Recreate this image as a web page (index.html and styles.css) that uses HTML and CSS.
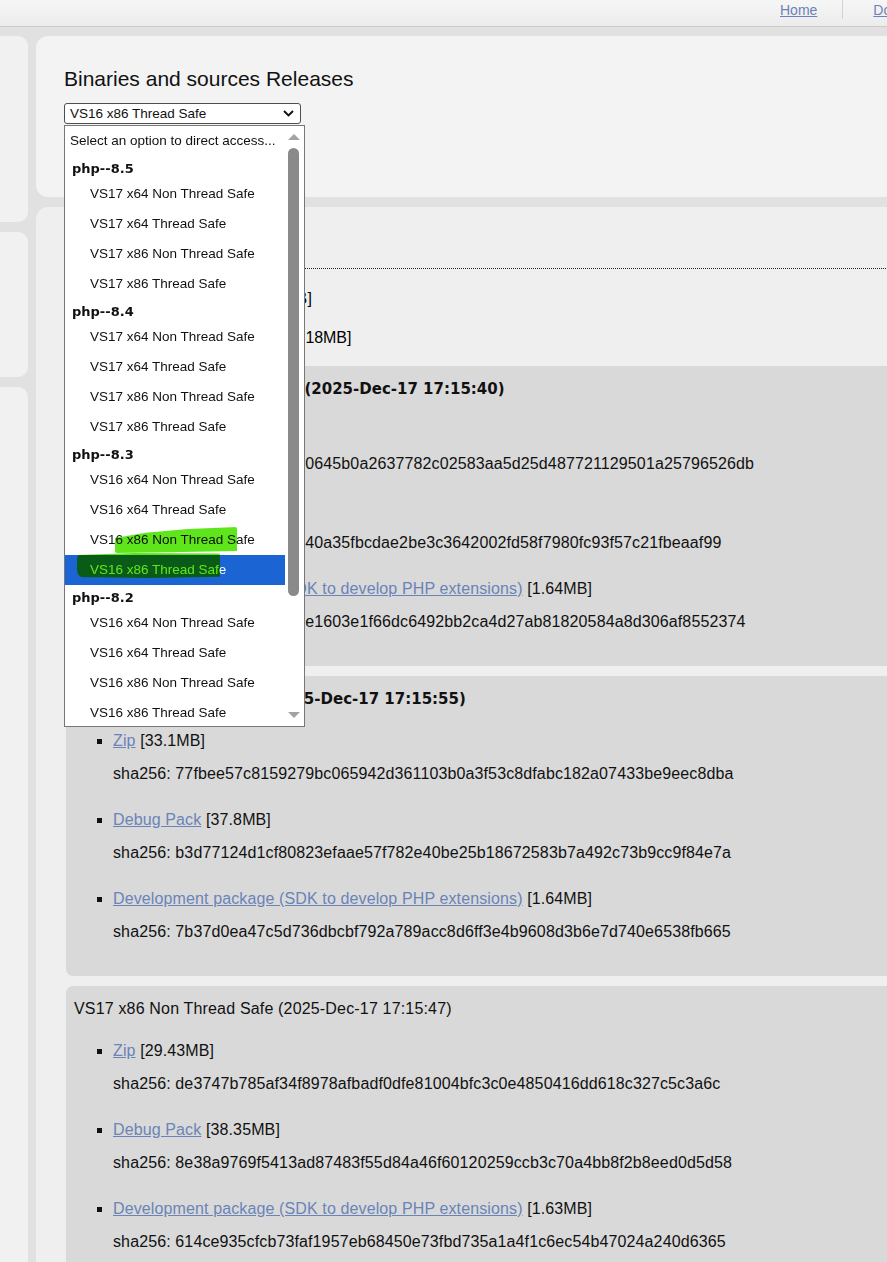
FILE: index.html
```html
<!DOCTYPE html>
<html lang="en">
<head>
<meta charset="utf-8">
<title>Binaries and sources Releases</title>
<link rel="stylesheet" href="styles.css">
</head>
<body>
<header class="topbar">
  <a class="navlink" href="#">Home</a>
  <span class="navsep"></span>
  <a class="navlink navlink-next" href="#">Downloads</a>
</header>
<div class="page">
  <aside class="sidebar">
    <div class="side-card side-a"></div>
    <div class="side-card side-b"></div>
    <div class="side-card side-c"></div>
  </aside>
  <main class="main">
    <section class="card card-select">
      <h2 class="title">Binaries and sources Releases</h2>
      <div class="select">
        <span class="select-value">VS16 x86 Thread Safe</span>
        <svg class="chevron" width="11" height="7" viewBox="0 0 11 7"><polyline points="1,1 5.5,5.5 10,1" fill="none" stroke="#111" stroke-width="1.9"/></svg>
      </div>
      <div class="popup">
        <ul class="options">
          <li class="opt placeholder">Select an option to direct access...</li>
          <li class="grp">php--8.5</li>
          <li class="opt">VS17 x64 Non Thread Safe</li>
          <li class="opt">VS17 x64 Thread Safe</li>
          <li class="opt">VS17 x86 Non Thread Safe</li>
          <li class="opt">VS17 x86 Thread Safe</li>
          <li class="grp">php--8.4</li>
          <li class="opt">VS17 x64 Non Thread Safe</li>
          <li class="opt">VS17 x64 Thread Safe</li>
          <li class="opt">VS17 x86 Non Thread Safe</li>
          <li class="opt">VS17 x86 Thread Safe</li>
          <li class="grp">php--8.3</li>
          <li class="opt">VS16 x64 Non Thread Safe</li>
          <li class="opt">VS16 x64 Thread Safe</li>
          <li class="opt">VS16 x86 Non Thread Safe</li>
          <li class="opt selected">VS16 x86 Thread Safe</li>
          <li class="grp">php--8.2</li>
          <li class="opt">VS16 x64 Non Thread Safe</li>
          <li class="opt">VS16 x64 Thread Safe</li>
          <li class="opt">VS16 x86 Non Thread Safe</li>
          <li class="opt">VS16 x86 Thread Safe</li>
          <li class="grp">php--8.1</li>
          <li class="opt">VS16 x64 Non Thread Safe</li>
        </ul>
        <div class="scrollbar">
          <span class="arrow arrow-up"></span>
          <span class="thumb"></span>
          <span class="arrow arrow-down"></span>
        </div>
        <span class="mark mark-1"></span>
        <span class="mark mark-2"></span>
      </div>
    </section>

    <section class="card card-release">
      <h3 class="release-title">PHP 8.5 (8.5.1)</h3>
      <span class="release-line first"><a class="link" href="#">Download source code</a> [26.15MB]</span>
      <span class="release-line second"><a class="link" href="#">Download tests package (phpt)</a> [6.18MB]</span>

      <div class="innerbox">
        <h4 class="build">VS17 x64 Non Thread Safe (2025-Dec-17 17:15:40)</h4>
        <ul class="files">
          <li><a class="link" href="#">Zip</a> [31.78MB]<span class="sha">sha256: 3b9e81d4c7a2f580645b0a2637782c02583aa5d25d487721129501a25796526db</span></li>
          <li><a class="link" href="#">Debug Pack</a> [36.92MB]<span class="sha">sha256: 8c2d71e05b9fa3640a35fbcdae2be3c3642002fd58f7980fc93f57c21fbeaaf99</span></li>
          <li><a class="link" href="#">Development package (SDK to develop PHP extensions)</a> [1.64MB]<span class="sha">sha256: 9d4f27ab0c36e82e1603e1f66dc6492bb2ca4d27ab81820584a8d306af8552374</span></li>
        </ul>
      </div>

      <div class="innerbox">
        <h4 class="build">VS17 x64 Thread Safe (2025-Dec-17 17:15:55)</h4>
        <ul class="files">
          <li><a class="link" href="#">Zip</a> [33.1MB]<span class="sha">sha256: 77fbee57c8159279bc065942d361103b0a3f53c8dfabc182a07433be9eec8dba</span></li>
          <li><a class="link" href="#">Debug Pack</a> [37.8MB]<span class="sha">sha256: b3d77124d1cf80823efaae57f782e40be25b18672583b7a492c73b9cc9f84e7a</span></li>
          <li><a class="link" href="#">Development package (SDK to develop PHP extensions)</a> [1.64MB]<span class="sha">sha256: 7b37d0ea47c5d736dbcbf792a789acc8d6ff3e4b9608d3b6e7d740e6538fb665</span></li>
        </ul>
      </div>

      <div class="innerbox">
        <h4 class="build plain">VS17 x86 Non Thread Safe (2025-Dec-17 17:15:47)</h4>
        <ul class="files">
          <li><a class="link" href="#">Zip</a> [29.43MB]<span class="sha">sha256: de3747b785af34f8978afbadf0dfe81004bfc3c0e4850416dd618c327c5c3a6c</span></li>
          <li><a class="link" href="#">Debug Pack</a> [38.35MB]<span class="sha">sha256: 8e38a9769f5413ad87483f55d84a46f60120259ccb3c70a4bb8f2b8eed0d5d58</span></li>
          <li><a class="link" href="#">Development package (SDK to develop PHP extensions)</a> [1.63MB]<span class="sha">sha256: 614ce935cfcb73faf1957eb68450e73fbd735a1a4f1c6ec54b47024a240d6365</span></li>
        </ul>
      </div>
    </section>
  </main>
</div>
</body>
</html>
```
FILE: styles.css
```css
* { box-sizing: border-box; }
html, body { margin: 0; padding: 0; }
body {
  width: 887px;
  height: 1262px;
  overflow: hidden;
  background: #e1e1e1;
  font-family: "Liberation Sans", Arial, sans-serif;
  color: #000;
}

/* top bar */
.topbar {
  height: 27px;
  background: linear-gradient(#f6f6f6, #ececec);
  border-bottom: 1px solid #cbcbcb;
  display: flex;
  align-items: flex-start;
  padding-left: 780px;
  white-space: nowrap;
  font-size: 14px;
  line-height: 20px;
}
.navlink { color: #6a84b8; text-decoration: underline; }
.navsep { width: 1px; height: 19px; background: #d2d2d2; margin-left: 25px; flex: none; }
.navlink-next { margin-left: 30px; }

/* page */
.page {
  display: flex;
  gap: 8px;
  padding-top: 9px;
}
.sidebar {
  width: 28px;
  flex: none;
  display: flex;
  flex-direction: column;
  gap: 10px;
}
.side-card { background: #f1f1f1; border-radius: 0 10px 10px 0; }
.side-a { height: 186px; }
.side-b { height: 145px; }
.side-c { height: 900px; }

.main {
  width: 900px;
  flex: none;
  display: flex;
  flex-direction: column;
  gap: 10px;
}
.card { background: #f3f3f3; border-radius: 12px 0 0 12px; }

/* select card */
.card-select {
  position: relative;
  z-index: 2;
  height: 161px;
  padding: 30px 0 0 28px;
}
.title {
  margin: 0;
  font-size: 21px;
  line-height: 26px;
  font-weight: normal;
  color: #111;
}
.select {
  margin-top: 11px;
  width: 237px;
  height: 21px;
  background: #fff;
  border: 1px solid #4f4f4f;
  border-radius: 3px;
  padding-left: 5px;
  display: flex;
  align-items: center;
  justify-content: space-between;
  padding-right: 6px;
}
.select-value { font-size: 13.5px; line-height: 19px; color: #111; }
.chevron { display: block; }

/* popup list */
.popup {
  position: absolute;
  left: 28px;
  top: 89px;
  width: 241px;
  height: 602px;
  background: #fff;
  border: 1px solid #777;
  overflow: hidden;
  display: flex;
  z-index: 3;
}
.options {
  list-style: none;
  margin: 0;
  padding: 0;
  width: 220px;
  flex: none;
}
.opt {
  height: 30px;
  line-height: 30px;
  padding-left: 25px;
  font-size: 13.5px;
  color: #111;
  white-space: nowrap;
}
.opt.placeholder { padding-left: 5px; }
.opt.selected { background: #1a64d3; color: #fff; }
.grp {
  height: 23px;
  padding: 3px 0 0 7px;
  line-height: 20px;
  font-family: "DejaVu Sans", Verdana, sans-serif;
  font-weight: bold;
  font-size: 13px;
  color: #111;
}
.scrollbar {
  position: relative;
  width: 19px;
  flex: none;
  background: #fff;
}
.thumb {
  position: absolute;
  left: 3px;
  top: 22px;
  width: 11px;
  height: 448px;
  border-radius: 6px;
  background: #8a8a8a;
}
.arrow {
  position: absolute;
  left: 3px;
  width: 0;
  height: 0;
  border-left: 6px solid transparent;
  border-right: 6px solid transparent;
}
.arrow-up { top: 8px; border-bottom: 6px solid #a3a3a3; }
.arrow-down { top: 586px; border-top: 6px solid #a3a3a3; }

/* highlighter strokes drawn over the list */
.mark {
  position: absolute;
  background: #5fe51c;
  mix-blend-mode: multiply;
}
.mark-1 {
  left: 50px;
  top: 401px;
  width: 122px;
  height: 26px;
  clip-path: polygon(0 42%, 25% 22%, 60% 8%, 100% 0, 100% 92%, 55% 96%, 0 100%);
  border-radius: 2px;
}
.mark-2 {
  left: 12px;
  top: 427px;
  width: 143px;
  height: 25px;
  border-radius: 6px 2px 2px 8px;
  clip-path: polygon(0 8%, 40% 0, 100% 2%, 100% 95%, 50% 100%, 0 96%);
}

/* release card */
.card-release {
  background: #efefef;
  padding: 20px 0 0 30px;
  height: 1200px;
}
.release-title {
  margin: 0;
  font-size: 18px;
  line-height: 24px;
  padding-bottom: 17px;
  border-bottom: 1px dotted #222;
}
.release-line {
  display: block;
  margin-top: 19px;
  font-size: 16px;
  line-height: 20px;
}
.release-line.first { margin-top: 20px; letter-spacing: 0.2px; }
.release-line.second { letter-spacing: -0.1px; }
.link { color: #6a84b8; text-decoration: underline; }

.innerbox {
  background: #d9d9d9;
  border-radius: 7px 0 0 7px;
  padding: 13px 0 14px 8px;
  margin-top: 10px;
}
.release-line + .innerbox { margin-top: 18px; }
.build {
  margin: 0;
  font-family: "DejaVu Sans", Verdana, sans-serif;
  font-weight: bold;
  font-size: 15px;
  line-height: 20px;
  color: #111;
}
.build.plain {
  font-family: "Liberation Sans", Arial, sans-serif;
  font-weight: normal;
  font-size: 16px;
  letter-spacing: 0.17px;
}
.files {
  list-style: square;
  margin: 22px 0 20px;
  padding-left: 39px;
  font-size: 16px;
  line-height: 20px;
  letter-spacing: 0.12px;
  color: #111;
}
.files li { margin-bottom: 26px; }
.files li:last-child { margin-bottom: 0; }
.sha { display: block; margin-top: 13px; }
```
